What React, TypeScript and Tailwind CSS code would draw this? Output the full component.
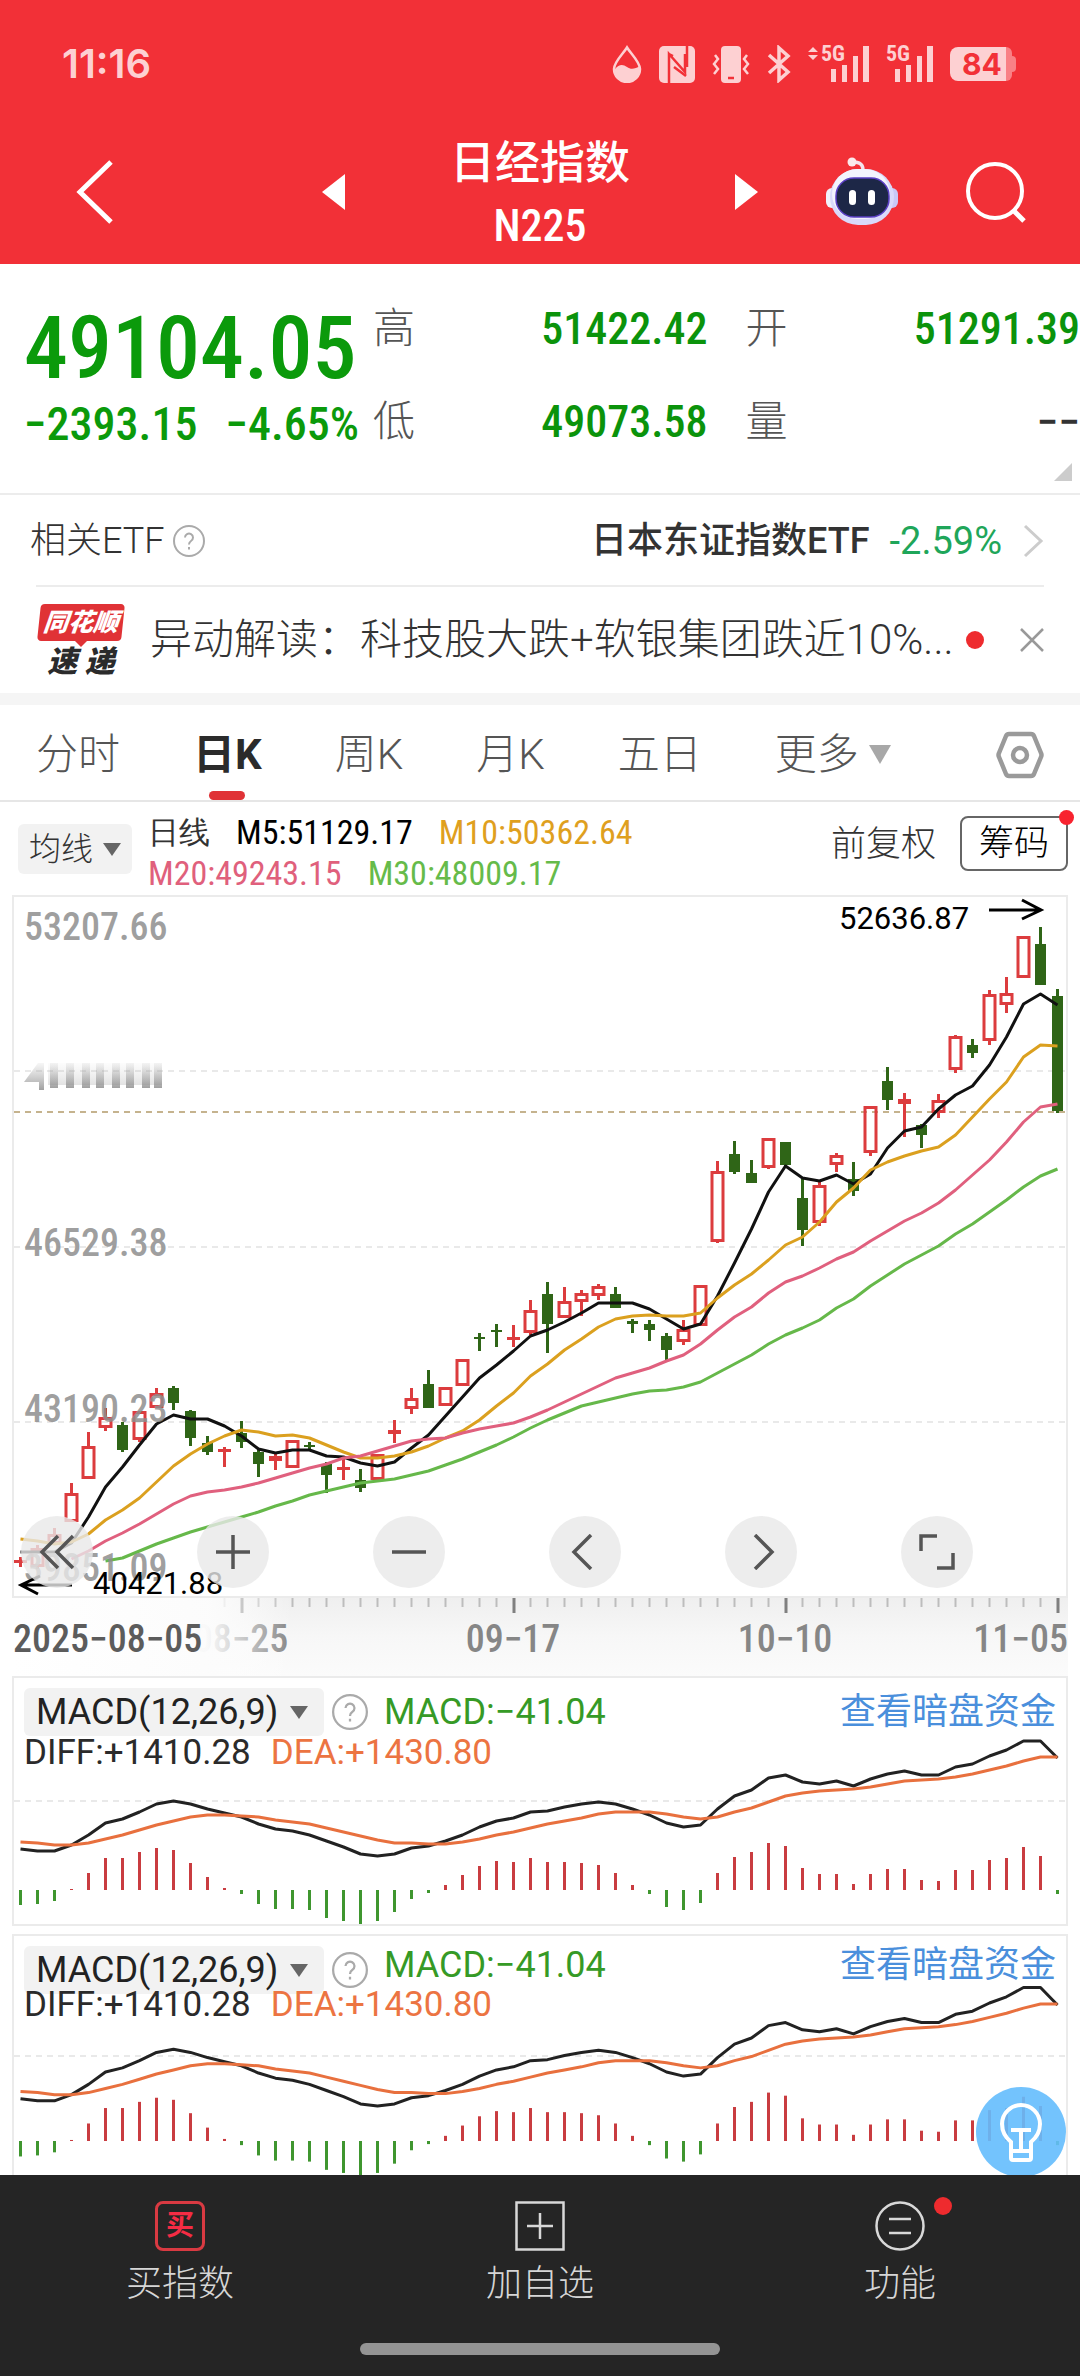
import type { ReactNode } from "react";

const numFont = "font-['Roboto_Condensed','Roboto',sans-serif]";

// Candles: [high, body top, body bottom, low, up?]
const candles: [number, number, number, number, number][] = [
  [660, 663, 666, 670, 1], [648, 651, 670, 672, 1], [631, 637, 647, 647, 1], [586, 596, 625, 625, 1],
  [535, 549, 582, 582, 1], [511, 520, 531, 534, 1], [525, 528, 553, 555, 0], [514, 514, 543, 545, 1],
  [491, 496, 511, 511, 1], [489, 491, 506, 513, 0], [513, 514, 541, 549, 0], [539, 546, 555, 558, 0],
  [550, 553, 554, 570, 1], [524, 536, 545, 551, 0], [553, 555, 567, 580, 0], [556, 559, 564, 573, 1],
  [543, 543, 571, 571, 1], [545, 548, 550, 553, 0], [565, 567, 578, 596, 0], [561, 570, 573, 583, 1],
  [572, 583, 591, 595, 0], [557, 557, 583, 583, 1], [523, 533, 537, 546, 1], [491, 501, 512, 517, 1],
  [473, 487, 511, 511, 0], [490, 490, 509, 509, 1], [462, 462, 489, 489, 1], [436, 440, 442, 454, 0],
  [427, 433, 435, 450, 0], [428, 440, 443, 450, 1], [403, 413, 436, 438, 1], [385, 397, 427, 456, 0],
  [390, 404, 421, 421, 1], [393, 396, 405, 419, 1], [387, 389, 399, 403, 1], [390, 397, 411, 411, 0],
  [422, 424, 427, 436, 0], [423, 427, 433, 444, 0], [436, 439, 453, 463, 0], [423, 432, 445, 448, 1],
  [388, 388, 429, 429, 1], [264, 274, 345, 346, 1], [244, 257, 275, 277, 0], [263, 276, 286, 286, 0],
  [241, 241, 271, 272, 1], [245, 245, 268, 269, 0], [282, 301, 333, 349, 0], [285, 288, 326, 329, 1],
  [256, 258, 268, 275, 1], [265, 282, 294, 299, 0], [209, 209, 256, 259, 1], [170, 184, 203, 213, 0],
  [196, 202, 207, 240, 1], [227, 228, 238, 251, 0], [197, 203, 216, 221, 1], [138, 139, 173, 176, 1],
  [142, 148, 156, 161, 0], [93, 97, 144, 148, 1], [80, 96, 108, 116, 1], [39, 39, 81, 81, 1],
  [30, 47, 88, 88, 0], [92, 99, 214, 216, 0],
];

const ma5 = [655, 655, 655, 646, 620, 590, 570, 548, 527, 518, 522, 522, 529, 539, 552, 556, 553, 553, 559, 560, 566, 569, 565, 551, 538, 519, 500, 481, 468, 454, 439, 433, 425, 416, 406, 406, 406, 412, 422, 432, 427, 399, 366, 332, 295, 269, 281, 284, 278, 287, 277, 251, 234, 230, 212, 198, 189, 168, 140, 107, 97, 108];
const ma10 = [642, 644, 647, 645, 637, 623, 613, 601, 585, 569, 557, 547, 539, 533, 535, 539, 538, 541, 548, 555, 561, 561, 559, 555, 549, 541, 534, 523, 509, 496, 479, 467, 453, 442, 430, 422, 419, 418, 419, 419, 416, 401, 388, 377, 363, 348, 340, 325, 305, 291, 273, 265, 259, 254, 250, 238, 220, 202, 185, 160, 148, 149];
const ma20 = [662, 654, 644, 636, 627, 617, 607, 599, 595, 593, 590, 586, 581, 576, 571, 567, 561, 559, 554, 549, 544, 542, 541, 536, 532, 529, 526, 520, 513, 505, 497, 489, 481, 476, 471, 464, 458, 447, 433, 420, 410, 396, 385, 379, 371, 362, 355, 344, 334, 324, 316, 306, 293, 278, 263, 245, 225, 210, 207];
const ma30 = [664, 661, 654, 647, 641, 635, 630, 625, 620, 615, 609, 604, 598, 594, 590, 586, 584, 582, 578, 574, 568, 562, 555, 548, 540, 531, 523, 516, 509, 505, 501, 497, 494, 493, 490, 485, 476, 467, 458, 447, 438, 431, 423, 411, 402, 389, 378, 367, 358, 349, 337, 327, 315, 303, 290, 279, 272];

const diff = [41, 39, 39, 45, 55, 67, 71, 78, 86, 89, 86, 81, 77, 73, 66, 61, 59, 55, 49, 43, 36, 34, 36, 42, 44, 49, 55, 63, 69, 72, 78, 79, 83, 86, 88, 86, 81, 75, 67, 63, 65, 81, 94, 100, 112, 115, 108, 106, 109, 104, 111, 116, 119, 115, 115, 123, 126, 134, 140, 149, 149, 132];
const dea = [48, 47, 45, 45, 47, 51, 55, 60, 65, 69, 73, 75, 75, 74, 73, 70, 68, 66, 62, 58, 54, 50, 47, 47, 46, 46, 48, 51, 55, 58, 62, 66, 69, 72, 76, 78, 78, 78, 76, 73, 71, 73, 78, 82, 88, 94, 97, 99, 100, 101, 103, 106, 109, 110, 111, 113, 116, 120, 124, 129, 133, 133];
const bars = [-15, -14, -11, 1, 17, 32, 32, 38, 42, 40, 27, 13, 2, -4, -14, -19, -19, -20, -28, -31, -36, -31, -22, -9, -3, 5, 15, 24, 29, 28, 32, 28, 28, 27, 25, 17, 5, -4, -17, -20, -13, 17, 33, 38, 47, 44, 22, 16, 16, 6, 16, 21, 21, 10, 9, 20, 20, 30, 32, 43, 34, -4];

const STEP = 17;
const xAt = (i: number) => 6.5 + STEP * i;
const toPoints = (ys: number[]) => {
  const start = candles.length - ys.length;
  return ys.map((y, i) => `${xAt(start + i)},${y}`).join(" ");
};

function StatusBar() {
  return (
    <div className="flex h-32 items-center justify-between pl-[62px] pr-[64px] text-[#fdd0d2]">
      <span className="font-['Inter',sans-serif] text-[40px] leading-none font-semibold">11:16</span>
      <div className="flex items-center gap-[17px]">
        <svg width="30" height="38" viewBox="0 0 30 38">
          <path d="M15 2.5C11 9 2 17 2 24a13 13 0 0 0 26 0C28 17 19 9 15 2.5z" fill="none" stroke="currentColor" strokeWidth="2.5" />
          <path d="M3 24c4-5 8-5 12-2s8 2 13-1c2 9-4 16-13 16S2 31 3 24z" fill="currentColor" />
        </svg>
        <svg width="36" height="38" viewBox="0 0 36 38">
          <rect width="36" height="37" y="1" rx="5" fill="currentColor" />
          <path d="M10 38V9l16 18V9M10 9l4 2M28 1v21" fill="none" stroke="#f23037" strokeWidth="2.5" />
          <path d="M15 22l12 9" stroke="#f23037" strokeWidth="2.5" />
        </svg>
        <svg width="38" height="38" viewBox="0 0 38 38" fill="none" stroke="currentColor" strokeWidth="2.5">
          <rect x="9" y="1" width="20" height="37" rx="4" fill="currentColor" stroke="none" />
          <path d="M3 10l3 4-4 5 4 5-4 5M35 10l-3 4 4 5-4 5 4 5" />
          <path d="M16 33h6" stroke="#f23037" />
        </svg>
        <svg width="24" height="38" viewBox="0 0 24 38" fill="none" stroke="currentColor" strokeWidth="3.5">
          <path d="M2 10l19 17-9 8V3l9 8L2 28" />
        </svg>
        <svg width="61" height="38" viewBox="0 0 61 38" fill="currentColor" className={`${numFont} overflow-visible`}>
          <path d="M0 7l5-5 5 5zM0 10l5 5 5-5z" />
          <text x="13" y="16" className="text-[22px] font-bold">5G</text>
          <path d="M23 24h5v13h-5zM34 20h5v17h-5zM45 11h5v26h-5zM55 1h6v36h-6z" />
        </svg>
        <svg width="47" height="38" viewBox="0 0 47 38" fill="currentColor" className={`${numFont} overflow-visible`}>
          <text x="0" y="16" className="text-[22px] font-bold">5G</text>
          <path d="M9 24h5v13H9zM20 20h5v17h-5zM31 11h5v26h-5zM41 1h6v36h-6z" />
        </svg>
        <div className="flex items-center">
          <span className="flex h-[34px] w-14 items-center justify-center rounded-l-lg bg-[#fdd0d2] pl-2 font-['Inter',sans-serif] text-[30px] leading-none font-bold text-[#f23037]">84</span>
          <span className="h-[34px] w-1.5 rounded-r-md bg-[#f98085]" />
          <span className="h-4 w-1 rounded-r bg-[#f98085]" />
        </div>
      </div>
    </div>
  );
}

function Robot() {
  return (
    <svg width="72" height="70" viewBox="0 0 72 70">
      <path d="M25 6c6-2 12 0 12 7" fill="none" stroke="#f4e4ee" strokeWidth="3.5" />
      <circle cx="26" cy="5" r="4.5" fill="#fbe9ec" />
      <rect x="0" y="31" width="12" height="20" rx="6" fill="#f1f1fb" />
      <rect x="60" y="31" width="12" height="20" rx="6" fill="#c9c8f6" />
      <rect x="4" y="12" width="64" height="56" rx="28" fill="#d9d9fa" />
      <rect x="6" y="12" width="58" height="50" rx="25" fill="#f3f3fd" />
      <rect x="10" y="21" width="53" height="39" rx="18" fill="#1d2747" stroke="#5a3fc4" strokeWidth="1.5" />
      <rect x="23" y="33" width="7" height="15" rx="3.5" fill="#fff" />
      <rect x="42" y="33" width="7" height="15" rx="3.5" fill="#fff" />
    </svg>
  );
}

function Header() {
  return (
    <header className="bg-[#f23037] text-white">
      <StatusBar />
      <div className="grid h-[136px] grid-cols-[1fr_436px_1fr] items-center pb-2">
        <button aria-label="返回" className="justify-self-start pl-[76px]">
          <svg width="38" height="64" viewBox="0 0 38 64" fill="none" stroke="currentColor" strokeWidth="5">
            <path d="M35 2L4 32l31 30" />
          </svg>
        </button>
        <div className="flex items-center justify-between">
          <button aria-label="上一个">
            <svg width="23" height="36" viewBox="0 0 23 36" fill="currentColor"><path d="M23 0v36L0 18z" /></svg>
          </button>
          <div className="flex flex-col items-center pt-1">
            <h1 className="text-[45px] leading-[64px] font-medium">日经指数</h1>
            <p className={`${numFont} text-[44px] leading-[60px] font-medium`}>N225</p>
          </div>
          <button aria-label="下一个">
            <svg width="23" height="36" viewBox="0 0 23 36" fill="currentColor"><path d="M0 0v36l23-18z" /></svg>
          </button>
        </div>
        <div className="flex items-center justify-end gap-[68px] pr-[54px]">
          <button aria-label="智能助手"><Robot /></button>
          <button aria-label="搜索">
            <svg width="60" height="62" viewBox="0 0 60 62" fill="none" stroke="currentColor" strokeWidth="4">
              <circle cx="29" cy="30" r="27" />
              <path d="M47 49l11 11" strokeWidth="5" />
            </svg>
          </button>
        </div>
      </div>
    </header>
  );
}

function Stat({ label, value, dark }: { label: string; value: string; dark?: boolean }) {
  return (
    <div className="flex items-center justify-between">
      <dt className="text-[42px] leading-[60px] font-light text-[#555]">{label}</dt>
      <dd className={`${numFont} text-[44px] leading-[62px] font-medium ${dark ? "text-[#333]" : "text-[#0b930b]"}`}>{value}</dd>
    </div>
  );
}

function Quote() {
  return (
    <section className="relative flex h-[231px] border-b-2 border-[#ececec] pt-[34px]">
      <div className={`${numFont} w-[373px] shrink-0 pl-6 font-medium text-[#0b9a0b]`}>
        <div className="pt-1 text-[88px] leading-[92px]">49104.05</div>
        <div className="flex gap-7 text-[46px] leading-[60px] whitespace-nowrap">
          <span>−2393.15</span>
          <span>−4.65%</span>
        </div>
      </div>
      <dl className="grid flex-1 grid-cols-2 content-start gap-x-[38px] gap-y-[31px]">
        <Stat label="高" value="51422.42" />
        <Stat label="开" value="51291.39" />
        <Stat label="低" value="49073.58" />
        <Stat label="量" value="−−" dark />
      </dl>
      <svg className="absolute right-2 bottom-3" width="18" height="18" viewBox="0 0 18 18" fill="#ccc"><path d="M18 0v18H0z" /></svg>
    </section>
  );
}

function HelpIcon({ size }: { size: number }) {
  return (
    <svg width={size} height={size} viewBox="0 0 32 32" fill="none" stroke="#aaa" strokeWidth="2">
      <circle cx="16" cy="16" r="15" />
      <path d="M12 12.5a4 4 0 1 1 6 3.5c-1.5 1-2 1.5-2 3.5M16 22v2.5" />
    </svg>
  );
}

function RelatedEtf() {
  return (
    <section className="px-9">
      <div className="-ml-1.5 flex h-[90px] items-center pt-0.5 text-[36px] leading-none text-[#333]">
        <span className="font-light">相关ETF</span>
        <button aria-label="说明" className="ml-2"><HelpIcon size={32} /></button>
        <a href="#etf" className="ml-auto flex items-center">
          <span className="font-medium">日本东证指数ETF</span>
          <span className="ml-5 text-[38px] text-[#1fa65a]">-2.59%</span>
          <svg className="ml-5" width="22" height="34" viewBox="0 0 22 34" fill="none" stroke="#ccc" strokeWidth="3">
            <path d="M3 2l16 15L3 32" />
          </svg>
        </a>
      </div>
      <div className="flex h-[108px] items-center border-t-2 border-[#ececec]">
        <div className="flex w-[90px] flex-col items-center leading-none font-black italic">
          <span className="flex h-[37px] w-[84px] -skew-x-6 items-center justify-center rounded bg-[#e03236] text-[25px] text-white">同花顺</span>
          <svg width="12" height="6" viewBox="0 0 12 6" fill="#e03236"><path d="M0 0h12L6 6z" /></svg>
          <span className="text-[30px] leading-[30px] whitespace-nowrap text-[#2b2b2b]">速 递</span>
        </div>
        <a href="#news" className="ml-6 flex-1 text-[42px] leading-none font-light whitespace-nowrap text-[#333]">
          异动解读：科技股大跌+软银集团跌近10%...
        </a>
        <span className="size-[18px] rounded-full bg-[#ee2b2e]" />
        <button aria-label="关闭" className="ml-9">
          <svg width="24" height="24" viewBox="0 0 24 24" stroke="#999" strokeWidth="2.5"><path d="M1 1l22 22M23 1L1 23" /></svg>
        </button>
      </div>
    </section>
  );
}

function Tabs() {
  return (
    <nav className="flex h-[109px] items-center gap-[73px] border-t-12 border-b-2 border-t-[#f5f5f5] border-b-[#e6e6e6] px-9 pt-1 text-[42px] font-light text-[#555]">
      <button>分时</button>
      <button className="relative font-bold text-[#2b2b2b]">
        日K
        <span className="absolute -bottom-[14px] left-1/2 h-[9px] w-9 -translate-x-1/2 rounded-full bg-[#e03236]" />
      </button>
      <button>周K</button>
      <button>月K</button>
      <button>五日</button>
      <button className="flex items-center gap-2.5">
        更多
        <svg width="22" height="19" viewBox="0 0 22 19" fill="#a8a8a8"><path d="M0 0h22L11 19z" /></svg>
      </button>
      <button aria-label="设置" className="ml-auto">
        <svg width="48" height="48" viewBox="0 0 48 48" fill="none" stroke="#9a9a9a" strokeWidth="4.5" strokeLinejoin="round">
          <path d="M13 3h22q2 0 3 2l7 17q1 2 0 4l-7 17q-1 2-3 2H13q-2 0-3-2L3 26q-1-2 0-4l7-17q1-2 3-2z" />
          <circle cx="24" cy="24" r="7" />
        </svg>
      </button>
    </nav>
  );
}

function Caret() {
  return <svg width="18" height="13" viewBox="0 0 18 13" fill="#666"><path d="M0 0h18L9 13z" /></svg>;
}

function MaLegend() {
  return (
    <div className="flex h-[93px] items-start pr-3 pl-[18px] text-[35px] font-light text-[#333]">
      <button className="mt-[22px] flex h-[50px] w-[114px] items-center justify-center gap-2.5 rounded-md bg-[#f2f2f2] text-[32px]">
        均线 <Caret />
      </button>
      <div className={`${numFont} mt-2.5 ml-4 text-[34px] leading-[41px]`}>
        <div className="flex gap-[26px]">
          <span className="text-[31px] text-[#333]">日线</span>
          <span className="font-normal text-black">M5:51129.17</span>
          <span className="font-normal text-[#dfa01e]">M10:50362.64</span>
        </div>
        <div className="flex gap-[26px]">
          <span className="font-normal text-[#e0607c]">M20:49243.15</span>
          <span className="font-normal text-[#66bb4a]">M30:48009.17</span>
        </div>
      </div>
      <button className="mt-4 ml-auto leading-[54px]">前复权</button>
      <button className="relative mt-3.5 ml-6 h-[55px] w-[108px] rounded-lg border-2 border-[#666] leading-[50px] text-black">
        筹码
        <span className="absolute -top-2 -right-2 size-[15px] rounded-full bg-[#f8232f]" />
      </button>
    </div>
  );
}

function RoundButton({ label, children }: { label: string; children: ReactNode }) {
  return (
    <button aria-label={label} className="flex size-[72px] items-center justify-center rounded-full bg-[#e9e9e9]/80">
      <svg width="36" height="36" viewBox="0 0 36 36" fill="none" stroke="#555" strokeWidth="3.5">{children}</svg>
    </button>
  );
}

function KLineChart() {
  return (
    <div className="relative mx-3 border-2 border-[#ebebeb]">
      <svg viewBox="0 0 1052 699" className="block h-auto w-full overflow-visible">
        {[174, 350, 525].map((y) => (
          <path key={y} d={`M0 ${y}H1052`} stroke="#e2e2e2" strokeWidth="1.5" strokeDasharray="6 5" />
        ))}
        <path d="M0 215H1052" stroke="#b39a6a" strokeWidth="1.5" strokeDasharray="6 5" />
        {candles.map(([high, top, bottom, low, up], i) => {
          const x = xAt(i);
          if (!up) {
            return (
              <g key={i} fill="#2f6517">
                <rect x={x - 1.5} y={high} width="3" height={low - high} />
                <rect x={x - 5.5} y={top} width="11" height={bottom - top} />
              </g>
            );
          }
          return (
            <g key={i} stroke="#dc3c3e" strokeWidth="3" fill="none">
              <path d={`M${x} ${high}V${top}M${x} ${bottom}V${low}`} />
              {bottom - top > 6 ? (
                <rect x={x - 5.5} y={top + 1.5} width="11" height={bottom - top - 3} />
              ) : (
                <path d={`M${x - 6.5} ${(top + bottom) / 2}h13`} strokeWidth={Math.max(3, bottom - top)} />
              )}
            </g>
          );
        })}
        <g fill="none" strokeWidth="3" strokeLinejoin="round">
          <polyline points={toPoints(ma5)} stroke="#111" />
          <polyline points={toPoints(ma10)} stroke="#dba01f" />
          <polyline points={toPoints(ma20)} stroke="#e0607e" />
          <polyline points={toPoints(ma30)} stroke="#66b84a" />
        </g>
        <g className={`${numFont} text-[38px] font-medium`} fill="#8e8e8e" fillOpacity="0.85">
          <text x="10" y="43">53207.66</text>
          <text x="10" y="359">46529.38</text>
          <text x="10" y="525">43190.23</text>
          <text x="10" y="684">39851.09</text>
        </g>
        <defs>
          <linearGradient id="smear" x1="0" y1="0" x2="0" y2="1">
            <stop offset="0" stopColor="#aaa" stopOpacity="0.1" />
            <stop offset="1" stopColor="#888" stopOpacity="0.8" />
          </linearGradient>
        </defs>
        <g fill="url(#smear)">
          <path d="M24 166l6 0 0 27-5 0 0-8-15 0z" />
          {[36, 52, 68, 82, 98, 112, 128, 140].map((x) => (
            <rect key={x} x={x} y="166" width="8" height="25" />
          ))}
          <rect x="34" y="166" width="114" height="22" fillOpacity="0.3" />
        </g>
        <g className="text-[31px]" fill="#000">
          <text x="825" y="32">52636.87</text>
          <text x="79" y="697">40421.88</text>
        </g>
        <g fill="none" stroke="#000" strokeWidth="3">
          <path d="M975 13h51M1008 3l19 10-19 9" />
          <path d="M58 688H8M26 679L7 688l17 9" />
        </g>
      </svg>
      <div className="absolute bottom-2 left-[7px] flex gap-[104px]">
        <RoundButton label="最早"><path d="M19 2L3 18l16 16M34 2L18 18l16 16" /></RoundButton>
        <RoundButton label="放大"><path d="M18 1v34M1 18h34" /></RoundButton>
        <RoundButton label="缩小"><path d="M1 18h34" /></RoundButton>
        <RoundButton label="向左"><path d="M24 1L7 18l17 17" /></RoundButton>
        <RoundButton label="向右"><path d="M12 1l17 17-17 17" /></RoundButton>
        <RoundButton label="全屏"><path d="M18 2H2v15M34 19v15H18" /></RoundButton>
      </div>
    </div>
  );
}

function TimeAxis() {
  return (
    <div className="mx-3">
      <svg viewBox="0 0 1056 78" className="block h-auto w-full">
        <defs>
          <linearGradient id="axisShade" x1="0" y1="0" x2="0" y2="1">
            <stop offset="0" stopColor="#efefef" />
            <stop offset="0.5" stopColor="#f7f7f7" />
            <stop offset="1" stopColor="#fbfbfb" />
          </linearGradient>
          <linearGradient id="axisFade">
            <stop offset="0" stopColor="#fff" />
            <stop offset="0.7" stopColor="#fcfcfc" stopOpacity="0.97" />
            <stop offset="1" stopColor="#fff" stopOpacity="0" />
          </linearGradient>
        </defs>
        <rect width="1056" height="78" fill="url(#axisShade)" />
        {Array.from({ length: 50 }, (_, n) => n + 12).map((i) => {
          const major = i % 16 === 13;
          return <rect key={i} x={7.5 + STEP * i} y="0" width={major ? 3 : 2} height={major ? 15 : 9} fill={major ? "#808080" : "#bdbdbd"} />;
        })}
        <g className={`${numFont} text-[38px] font-medium`} fill="#868686">
          <text x="229" y="54" textAnchor="middle">08−25</text>
          <text x="501" y="54" textAnchor="middle">09−17</text>
          <text x="773" y="54" textAnchor="middle">10−10</text>
          <text x="1056" y="54" textAnchor="end">11−05</text>
          <rect width="280" height="78" fill="url(#axisFade)" />
          <text x="1" y="54" fill="#5c5c5c">2025−08−05</text>
        </g>
      </svg>
    </div>
  );
}

function MacdPanel({ base, grid, scale, tight }: { base: number; grid: number; scale: number; tight?: boolean }) {
  const line = (hs: number[]) => toPoints(hs.map((h) => base - h * scale));
  return (
    <section className="mx-3 grid border-2 border-[#ebebeb] *:[grid-area:1/1]">
      <svg viewBox="0 0 1052 246" className="block h-auto w-full">
        <path d={`M0 ${grid}H1052`} stroke="#e2e2e2" strokeWidth="1.5" strokeDasharray="6 5" />
        {bars.map((h, i) => (
          <rect key={i} x={xAt(i) - 1.5} y={h > 0 ? base - h * scale : base} width="3" height={Math.abs(h) * scale} fill={h > 0 ? "#c93c40" : "#3f962f"} />
        ))}
        <g fill="none" strokeWidth="3" strokeLinejoin="round">
          <polyline points={line(diff)} stroke="#222" />
          <polyline points={line(dea)} stroke="#e8703e" />
        </g>
      </svg>
      <div className="pt-2.5 pr-2.5 pl-2.5 text-[35px]">
        <div className="flex h-12 items-center">
          <button className="flex h-12 w-[300px] items-center gap-3 rounded-md bg-[#f2f2f2] pl-3 text-[36px] leading-none text-[#222]">
            MACD(12,26,9) <Caret />
          </button>
          <button aria-label="说明" className="ml-2"><HelpIcon size={36} /></button>
          <div className={`ml-4 flex flex-1 justify-between text-[36px] leading-[48px] ${tight ? "pb-2.5" : ""}`}>
            <span className="text-[#369a26]">MACD:−41.04</span>
            <a href="#funds" className="text-[#4a8fdc]">查看暗盘资金</a>
          </div>
        </div>
        <div className={`flex gap-5 leading-[34px] ${tight ? "-mt-1.5" : ""}`}>
          <span className="text-[#2b2b2b]">DIFF:+1410.28</span>
          <span className="text-[#ec7442]">DEA:+1430.80</span>
        </div>
      </div>
    </section>
  );
}

function NavItem({ label, children }: { label: string; children: ReactNode }) {
  return (
    <button className="flex flex-col items-center gap-3 text-[36px] leading-[42px] font-light text-[#d6d6d6]">
      {children}
      {label}
    </button>
  );
}

function BottomNav() {
  return (
    <footer className="bg-[#252525]">
      <div className="grid grid-cols-3 pt-[26px]">
        <NavItem label="买指数">
          <span className="flex size-[50px] items-center justify-center rounded-lg border-3 border-[#d93a42] text-[28px] leading-none font-bold text-[#f52c44]">买</span>
        </NavItem>
        <NavItem label="加自选">
          <svg width="50" height="50" viewBox="0 0 50 50" fill="none" stroke="#d8d8d8" strokeWidth="2.5">
            <rect x="1.5" y="1.5" width="47" height="47" />
            <path d="M25 12v26M12 25h26" />
          </svg>
        </NavItem>
        <NavItem label="功能">
          <span className="relative">
            <svg width="50" height="50" viewBox="0 0 50 50" fill="none" stroke="#d8d8d8" strokeWidth="2.5">
              <circle cx="25" cy="25" r="23.5" />
              <path d="M14 18h22M14 32h22" />
            </svg>
            <span className="absolute -top-1 left-[59px] size-[18px] rounded-full bg-[#ee2b2e]" />
          </span>
        </NavItem>
      </div>
      <div className="mx-auto mt-[38px] mb-[21px] h-3 w-1/3 rounded-full bg-[#949494]" />
    </footer>
  );
}

export default function App() {
  return (
    <div className="flex h-screen flex-col bg-white font-['Roboto','Noto_Sans_CJK_SC',sans-serif]">
      <Header />
      <main className="relative min-h-0 flex-1 overflow-hidden">
        <Quote />
        <RelatedEtf />
        <Tabs />
        <MaLegend />
        <KLineChart />
        <TimeAxis />
        <MacdPanel base={212} grid={123} scale={1} />
        <div className="h-2" />
        <MacdPanel base={205} grid={120} scale={1.03} tight />
        <button aria-label="提示" className="absolute right-3.5 -bottom-0.5 flex size-[90px] items-center justify-center rounded-full bg-[#64bdfd]/90">
          <svg width="44" height="60" viewBox="0 0 44 60" fill="none" stroke="#fff" strokeWidth="4">
            <path d="M12 46v-6C6 35 3 30 3 22a19 19 0 0 1 38 0c0 8-3 13-9 18v16q0 2-2 2H14q-2 0-2-2V46zM12 49h20M22 48V28M12 28h20" />
          </svg>
        </button>
      </main>
      <BottomNav />
    </div>
  );
}
